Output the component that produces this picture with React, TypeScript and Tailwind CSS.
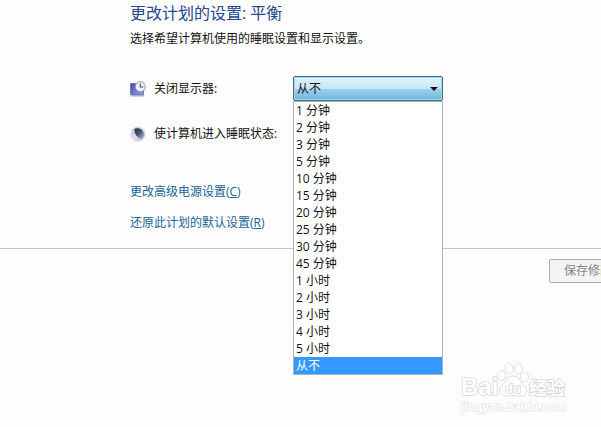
import React, { useState } from "react";

const times = [
  "1 分钟", "2 分钟", "3 分钟", "5 分钟", "10 分钟", "15 分钟", "20 分钟", "25 分钟",
  "30 分钟", "45 分钟", "1 小时", "2 小时", "3 小时", "4 小时", "5 小时", "从不",
];

function DisplayIcon() {
  return (
    <svg viewBox="0 0 16 16" className="size-4 shrink-0" aria-hidden="true">
      <defs>
        <linearGradient id="screen" x1="0" y1="0" x2="1" y2="1">
          <stop offset="0" stopColor="#3c4ab0" />
          <stop offset="1" stopColor="#9aa5ec" />
        </linearGradient>
      </defs>
      <path d="M0.500 2.500H13.500V13.500H0.500Z" fill="url(#screen)" stroke="#7078b4" />
      <path d="M1 14.800H14" stroke="#9a9cb8" strokeWidth="1.200" />
      <circle cx="10.300" cy="5.700" r="5" fill="#f1f3f6" stroke="#8f959f" />
      <path d="M10.300 2.500V6H13.300" fill="none" stroke="#4c5563" strokeWidth="1.200" />
    </svg>
  );
}

function SleepIcon() {
  return (
    <svg viewBox="0 0 16 16" className="size-4 shrink-0" aria-hidden="true">
      <defs>
        <linearGradient id="moon" x1="0" y1="0" x2="1" y2="1">
          <stop offset="0" stopColor="#b3bac8" />
          <stop offset="0.500" stopColor="#dfe4ec" />
          <stop offset="1" stopColor="#9cabc8" />
        </linearGradient>
        <linearGradient id="shade" x1="0" y1="0" x2="1" y2="1">
          <stop offset="0" stopColor="#262f42" />
          <stop offset="0.450" stopColor="#465470" />
          <stop offset="1" stopColor="#aab6cc" />
        </linearGradient>
      </defs>
      <circle cx="8" cy="8" r="7.200" fill="url(#moon)" stroke="#d9dce3" />
      <path d="M4.500 3C8 1 13.500 3 13.800 8C13.900 10.500 12.800 12 11.300 12.800C8 12.300 4 8.500 4.500 3Z" fill="url(#shade)" />
    </svg>
  );
}

function Watermark() {
  return (
    <svg viewBox="0 0 112 56" className="absolute right-7 bottom-3 h-14 w-28" aria-label="Baidu 经验">
      <g fill="#fefefe" stroke="#dedede" strokeWidth="1">
        <ellipse cx="48" cy="9.500" rx="4" ry="5.500" />
        <ellipse cx="57.500" cy="9.500" rx="4" ry="5.500" />
        <ellipse cx="40.500" cy="16.500" rx="4" ry="5" />
        <ellipse cx="63.500" cy="18" rx="4" ry="5" />
        <path d="M52 17C57 17 59 22 62.500 26C68 31 66 37 59 37C56 37 54 36.500 52 36.500C50 36.500 48 37 45 37C38 37 36 31 41 26C45 23 46 17 52 17Z" />
        <g className="font-['Liberation_Sans','Noto_Sans_CJK_SC',sans-serif] font-bold [paint-order:stroke]" stroke="#d8d8d8" strokeWidth="1.600">
          <text x="0" y="36" fontSize="24">Bai</text>
          <text x="44" y="34" fontSize="13">du</text>
          <text x="68" y="36" fontSize="18">经验</text>
        </g>
      </g>
      <text x="0" y="52" fontSize="12" fill="#fefefe" stroke="#e2e2e2" strokeWidth="1.200" className="font-['Liberation_Sans',sans-serif] font-bold [paint-order:stroke]">jingyan.baidu.com</text>
    </svg>
  );
}

export default function App() {
  const [value, setValue] = useState("从不");
  return (
    <div className="relative min-h-screen overflow-hidden bg-[#fdfdfd] font-['Open_Sans','Noto_Sans_CJK_SC',sans-serif] text-xs text-[#111]">
      <main className="pl-[130px]">
        <h1 className="pt-px text-base leading-6 text-[#24478f]">更改计划的设置: 平衡</h1>
        <p className="pt-1.5 leading-4">选择希望计算机使用的睡眠设置和显示设置。</p>

        <div className="mt-[29px] flex h-[25px] items-center">
          <label htmlFor="display" className="flex w-[163px] items-center gap-2">
            <DisplayIcon />
            关闭显示器:
          </label>
          <div className="relative w-[150px]">
            <select
              id="display"
              value={value}
              onChange={(e) => setValue(e.target.value)}
              className="block h-[25px] w-full appearance-none rounded-xs border border-[#3f6d88] bg-[linear-gradient(#e3f4fc,#c6e6f7_50%,#9dd2ee_50%,#6fb6dc)] px-[3px] text-xs shadow-[inset_0_0_0_1px_#a5d5ec]"
            >
              {times.map((t) => <option key={t}>{t}</option>)}
            </select>
            <svg viewBox="0 0 8 4" className="pointer-events-none absolute top-[11px] right-[5px] h-1 w-2" aria-hidden="true">
              <path d="M0 0H8L4 4Z" fill="#111" />
            </svg>
            <ul role="listbox" aria-label="关闭显示器" className="absolute top-full left-0 z-10 w-full border border-[#a9b2ba] bg-white">
              {times.map((t) => (
                <li
                  key={t}
                  role="option"
                  aria-selected={t === value}
                  onClick={() => setValue(t)}
                  className="px-0.5 leading-[17px] aria-selected:bg-[#3399ff] aria-selected:text-white"
                >
                  {t}
                </li>
              ))}
            </ul>
          </div>
        </div>

        <div className="mt-5 flex h-[25px] items-center gap-2">
          <SleepIcon />
          使计算机进入睡眠状态:
        </div>

        <nav className="flex flex-col items-start gap-[15px] pt-[38px] pb-[17px] leading-4 text-[#1a6496]">
          <a href="#advanced">更改高级电源设置(<u>C</u>)</a>
          <a href="#restore">还原此计划的默认设置(<u>R</u>)</a>
        </nav>
      </main>

      <footer className="flex justify-end border-t border-[#bfc3c6] pt-2.5">
        <button className="-mr-[26px] h-6 shrink-0 rounded-xs border border-[#adadad] bg-[#f4f4f4] px-3.5 text-[#838383]">
          保存修改
        </button>
      </footer>
      <Watermark />
    </div>
  );
}
